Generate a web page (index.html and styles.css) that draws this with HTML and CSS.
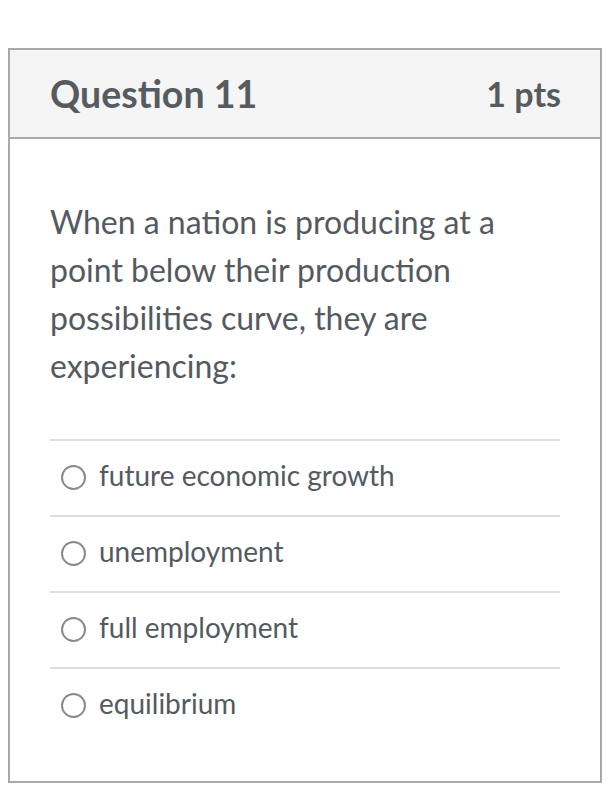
FILE: index.html
```html
<!DOCTYPE html>
<html>
<head>
<meta charset="utf-8">
<link rel="stylesheet" href="styles.css">
</head>
<body>
<div class="question">
  <div class="q-header">
    <span class="q-title">Question 11</span>
    <span class="q-pts">1 pts</span>
  </div>
  <div class="q-body">
    <p class="q-text">When a nation is producing at a point below their production possibilities curve, they are experiencing:</p>
    <ul class="answers">
      <li class="answer"><span class="radio"></span><span class="label">future economic growth</span></li>
      <li class="answer"><span class="radio"></span><span class="label">unemployment</span></li>
      <li class="answer"><span class="radio"></span><span class="label">full employment</span></li>
      <li class="answer"><span class="radio"></span><span class="label">equilibrium</span></li>
    </ul>
  </div>
</div>
</body>
</html>
```
FILE: styles.css
```css
html, body {
  margin: 0;
  padding: 0;
  background: #ffffff;
}
body {
  font-family: Lato, "Open Sans", sans-serif;
  color: #545a5f;
}
.question {
  margin: 48px 0 0 8px;
  width: 594px;
  box-sizing: border-box;
  border: 2px solid #a9a9a9;
}
.q-header {
  display: flex;
  justify-content: space-between;
  align-items: center;
  height: 89px;
  box-sizing: border-box;
  padding: 0 39px 0 40px;
  background: #f5f5f5;
  border-bottom: 2px solid #a9a9a9;
  font-weight: 700;
  color: #565b60;
}
.q-title {
  font-size: 37.5px;
}
.q-pts {
  font-size: 34px;
}
.q-body {
  padding: 59px 40px 38px 40px;
}
.q-text {
  margin: 0;
  font-size: 32px;
  line-height: 48px;
}
.answers {
  list-style: none;
  margin: 49px 0 0 0;
  padding: 0;
}
.answer {
  display: flex;
  align-items: center;
  height: 76px;
  box-sizing: border-box;
  padding-bottom: 6px;
  border-top: 2px solid #dedede;
  font-size: 28px;
}
.radio {
  width: 21px;
  height: 21px;
  border: 2.5px solid #8a8a8a;
  border-radius: 50%;
  margin: 4px 13px 0 11px;
  flex: none;
}
```
